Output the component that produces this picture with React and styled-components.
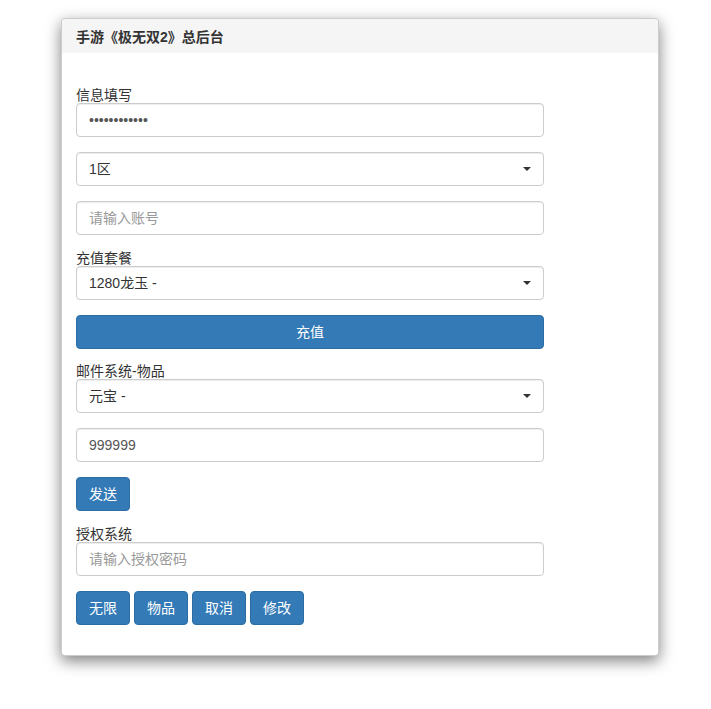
import React, { useState } from 'react';
import styled, { createGlobalStyle } from 'styled-components';

const GlobalStyle = createGlobalStyle`
  html, body {
    margin: 0;
    padding: 0;
    background: #fff;
  }
  body {
    font-family: "Liberation Sans", "Noto Sans CJK SC", sans-serif;
    font-size: 14px;
    color: #333;
  }
  * {
    box-sizing: border-box;
  }
`;

const Page = styled.div`
  padding: 18px 0 40px 61px;
`;

const Panel = styled.div`
  width: 598px;
  background: #fff;
  border: 1px solid rgba(0, 0, 0, 0.2);
  border-radius: 4px;
  box-shadow: 0 5px 15px rgba(0, 0, 0, 0.5);
  overflow: hidden;
`;

const Header = styled.div`
  height: 34px;
  background: #f5f5f5;
  padding: 0 14px;
  display: flex;
  align-items: center;
  font-weight: bold;
  font-size: 14px;
  color: #333;
`;

const Body = styled.div`
  padding: 34px 14px 15px;
  width: 483px;
`;

const Group = styled.div`
  margin-bottom: ${(p) => (p.$tight ? '14px' : '15px')};
`;

const Label = styled.label`
  display: block;
  font-size: 14px;
  line-height: 16px;
  color: #333;
`;

const Input = styled.input`
  display: block;
  width: 468px;
  height: 34px;
  padding: 6px 12px;
  font-family: inherit;
  font-size: 14px;
  color: #555;
  background: #fff;
  border: 1px solid #ccc;
  border-radius: 4px;
  box-shadow: inset 0 1px 1px rgba(0, 0, 0, 0.075);
  outline: none;
  &::placeholder {
    color: #999;
  }
`;

const SelectWrap = styled.div`
  position: relative;
  width: 468px;
`;

const Select = styled.select`
  display: block;
  width: 100%;
  height: 34px;
  padding: 6px 12px;
  font-family: inherit;
  font-size: 14px;
  color: #333;
  background: #fff;
  border: 1px solid #ccc;
  border-radius: 4px;
  box-shadow: inset 0 1px 1px rgba(0, 0, 0, 0.075);
  appearance: none;
  outline: none;
`;

const Caret = styled.span`
  position: absolute;
  right: 13px;
  top: 15px;
  width: 0;
  height: 0;
  border-left: 4px solid transparent;
  border-right: 4px solid transparent;
  border-top: 4px solid #333;
  pointer-events: none;
`;

const Button = styled.button`
  display: ${(p) => (p.$block ? 'block' : 'inline-block')};
  width: ${(p) => (p.$block ? '468px' : 'auto')};
  height: 34px;
  padding: 6px 12px;
  font-family: inherit;
  font-size: 14px;
  line-height: 20px;
  color: #fff;
  background: #337ab7;
  border: 1px solid #2e6da4;
  border-radius: 4px;
  cursor: pointer;
  &:hover {
    background: #286090;
  }
`;

const ButtonRow = styled.div`
  display: flex;
  gap: 4px;
`;

const Dropdown = ({ value, onChange, options }) => (
  <SelectWrap>
    <Select value={value} onChange={(e) => onChange(e.target.value)}>
      {options.map((o) => (
        <option key={o} value={o}>{o}</option>
      ))}
    </Select>
    <Caret />
  </SelectWrap>
);

const App = () => {
  const [zone, setZone] = useState('1区');
  const [pack, setPack] = useState('1280龙玉 -');
  const [item, setItem] = useState('元宝 -');
  const [count, setCount] = useState('999999');
  const [account, setAccount] = useState('');
  const [authPwd, setAuthPwd] = useState('');

  return (
    <>
      <GlobalStyle />
      <Page>
        <Panel>
          <Header>手游《极无双2》总后台</Header>
          <Body>
            <Group>
              <Label>信息填写</Label>
              <Input type="password" defaultValue="123456789012" />
            </Group>
            <Group>
              <Dropdown value={zone} onChange={setZone} options={['1区', '2区', '3区']} />
            </Group>
            <Group>
              <Input
                placeholder="请输入账号"
                value={account}
                onChange={(e) => setAccount(e.target.value)}
              />
            </Group>
            <Group>
              <Label>充值套餐</Label>
              <Dropdown value={pack} onChange={setPack} options={['1280龙玉 -', '6480龙玉 -']} />
            </Group>
            <Group $tight>
              <Button $block>充值</Button>
            </Group>
            <Group>
              <Label>邮件系统-物品</Label>
              <Dropdown value={item} onChange={setItem} options={['元宝 -', '绑定元宝 -']} />
            </Group>
            <Group>
              <Input value={count} onChange={(e) => setCount(e.target.value)} />
            </Group>
            <Group>
              <Button>发送</Button>
            </Group>
            <Group>
              <Label>授权系统</Label>
              <Input
                placeholder="请输入授权密码"
                value={authPwd}
                onChange={(e) => setAuthPwd(e.target.value)}
              />
            </Group>
            <Group>
              <ButtonRow>
                <Button>无限</Button>
                <Button>物品</Button>
                <Button>取消</Button>
                <Button>修改</Button>
              </ButtonRow>
            </Group>
          </Body>
        </Panel>
      </Page>
    </>
  );
};

export default App;
